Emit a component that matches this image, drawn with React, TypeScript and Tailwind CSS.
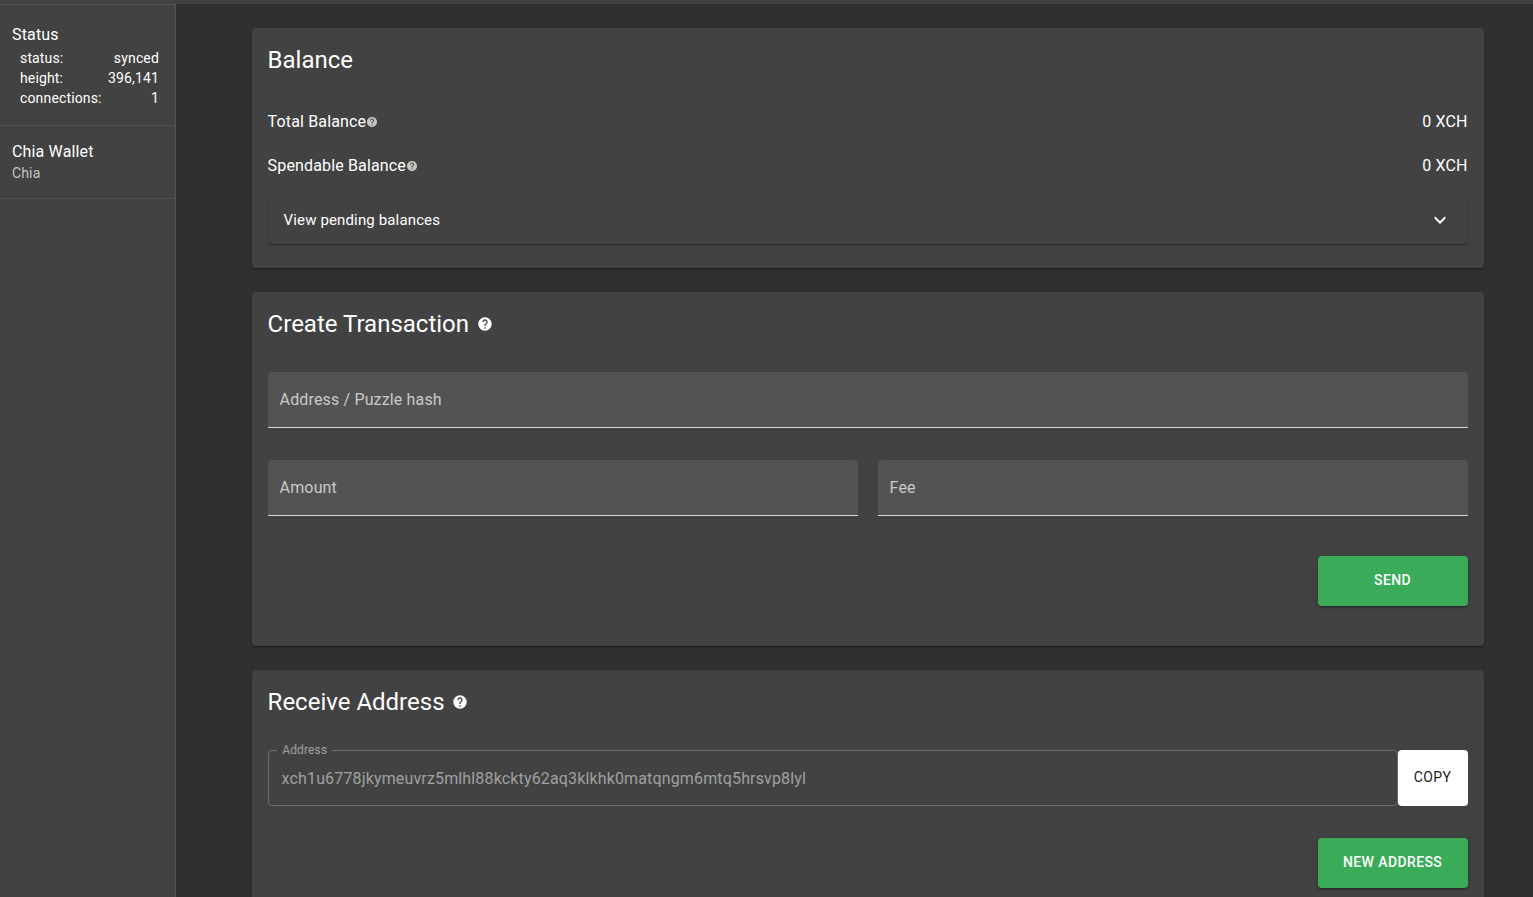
const HELP = "M12 2C6.48 2 2 6.48 2 12s4.48 10 10 10 10-4.48 10-10S17.52 2 12 2zm1 17h-2v-2h2v2zm2.07-7.75l-.9.92C13.45 12.9 13 13.5 13 15h-2v-.5c0-1.1.45-2.1 1.17-2.83l1.24-1.26c.37-.36.59-.86.59-1.41 0-1.1-.9-2-2-2s-2 .9-2 2H8c0-2.21 1.79-4 4-4s4 1.79 4 4c0 .88-.36 1.68-.93 2.25z";

function Help({ className }: { className: string }) {
  return (
    <svg viewBox="0 0 24 24" className={className} fill="currentColor">
      <path d={HELP} />
    </svg>
  );
}

function StatusRow({ label, value }: { label: string; value: string }) {
  return (
    <div className="flex h-5 items-center justify-between text-[14px] leading-5 tracking-[0.15px] text-white">
      <span>{label}</span>
      <span>{value}</span>
    </div>
  );
}

function BalanceRow({ label, value }: { label: string; value: string }) {
  return (
    <div className="flex h-11 items-center justify-between text-[16px] tracking-[0.15px] text-white">
      <div className="flex items-center">
        <span>{label}</span>
        <Help className="h-[12px] w-[12px] text-white/70" />
      </div>
      <span>{value}</span>
    </div>
  );
}

function Filled({ label, className }: { label: string; className: string }) {
  return (
    <div className={`flex h-14 items-center rounded-t border-b border-[#d5d5d5] bg-[#535353] px-3 text-[16px] tracking-[0.15px] text-white/70 ${className}`}>
      {label}
    </div>
  );
}

export default function App() {
  return (
    <div className="flex h-[897px] w-full flex-col overflow-hidden bg-[#303030] font-['Roboto',sans-serif]">
      <div className="h-1 shrink-0 bg-[#424242]" />
      <div className="flex min-h-0 flex-1">
        <aside className="w-[176px] shrink-0 border-t border-r border-[#515151] bg-[#424242]">
          <div className="h-[121px] border-b border-[#515151] pt-[18px] pr-4 pl-3">
            <div className="text-[16px] leading-6 tracking-[0.15px] text-white">Status</div>
            <div className="pl-2 pt-px">
              <StatusRow label="status:" value="synced" />
              <StatusRow label="height:" value="396,141" />
              <StatusRow label="connections:" value="1" />
            </div>
          </div>
          <div className="h-[73px] border-b border-[#515151] pt-[14px] pl-3">
            <div className="text-[16px] leading-6 tracking-[0.15px] text-white">Chia Wallet</div>
            <div className="-mt-px text-[14px] leading-5 tracking-[0.15px] text-white/70">Chia</div>
          </div>
        </aside>
        <main className="flex min-w-0 flex-1 flex-col gap-6 pt-6 pr-[49.4px] pl-[75.6px]">
          <section className="h-[240px] shrink-0 rounded bg-[#424242] p-4 shadow-[0_2px_1px_-1px_rgba(0,0,0,0.2),0_1px_1px_0_rgba(0,0,0,0.14),0_1px_3px_0_rgba(0,0,0,0.12)]">
            <h2 className="text-[24px] leading-8 text-white">Balance</h2>
            <div className="mt-6">
              <BalanceRow label="Total Balance" value="0 XCH" />
              <BalanceRow label="Spendable Balance" value="0 XCH" />
            </div>
            <div className="mt-[8px] flex h-12 items-center justify-between rounded bg-[#424242] px-4 text-[15px] tracking-[0.14px] text-white shadow-[0_2px_1px_-1px_rgba(0,0,0,0.2),0_1px_1px_0_rgba(0,0,0,0.14),0_1px_3px_0_rgba(0,0,0,0.12)]">
              <span>View pending balances</span>
              <svg viewBox="0 0 24 24" className="h-6 w-6 text-white" fill="currentColor">
                <path d="M16.59 8.59L12 13.17 7.41 8.59 6 10l6 6 6-6z" />
              </svg>
            </div>
          </section>

          <section className="h-[354px] shrink-0 rounded bg-[#424242] p-4 shadow-[0_2px_1px_-1px_rgba(0,0,0,0.2),0_1px_1px_0_rgba(0,0,0,0.14),0_1px_3px_0_rgba(0,0,0,0.12)]">
            <div className="flex h-8 items-center gap-2">
              <h2 className="text-[24px] leading-8 text-white">Create Transaction</h2>
              <Help className="h-4 w-4 text-white" />
            </div>
            <Filled label="Address / Puzzle hash" className="mt-[32px]" />
            <div className="mt-8 flex gap-5">
              <Filled label="Amount" className="flex-1" />
              <Filled label="Fee" className="flex-1" />
            </div>
            <div className="mt-10 flex justify-end">
              <button className="h-[50px] w-[150px] rounded bg-[#3aac59] pb-[2px] text-[14px] font-medium tracking-[0.4px] text-white shadow-[0_3px_1px_-2px_rgba(0,0,0,0.2),0_2px_2px_0_rgba(0,0,0,0.14),0_1px_5px_0_rgba(0,0,0,0.12)]">
                SEND
              </button>
            </div>
          </section>

          <section className="h-[300px] shrink-0 rounded bg-[#424242] p-4 shadow-[0_2px_1px_-1px_rgba(0,0,0,0.2),0_1px_1px_0_rgba(0,0,0,0.14),0_1px_3px_0_rgba(0,0,0,0.12)]">
            <div className="flex h-8 items-center gap-[7px]">
              <h2 className="text-[24px] leading-8 text-white">Receive Address</h2>
              <Help className="h-4 w-4 text-white" />
            </div>
            <div className="mt-[32px] flex">
              <div className="relative flex h-14 flex-1 items-center rounded border border-[#6d6d6d] px-[13px] pt-[2px] text-[16px] tracking-[0.15px] text-white/50">
                <span className="absolute -top-[8px] left-[8.6px] bg-[#424242] px-[5px] text-[12px] leading-[14px] text-white/50">Address</span>
                xch1u6778jkymeuvrz5mlhl88kckty62aq3klkhk0matqngm6mtq5hrsvp8lyl
              </div>
              <button className="h-14 w-[70px] rounded bg-white pb-[2px] text-[14px] font-normal tracking-[0.4px] text-[#212121]">
                COPY
              </button>
            </div>
            <div className="mt-8 flex justify-end">
              <button className="h-[50px] w-[150px] rounded bg-[#3aac59] pb-[2px] text-[14px] font-medium tracking-[0.4px] text-white shadow-[0_3px_1px_-2px_rgba(0,0,0,0.2),0_2px_2px_0_rgba(0,0,0,0.14),0_1px_5px_0_rgba(0,0,0,0.12)]">
                NEW ADDRESS
              </button>
            </div>
          </section>
        </main>
      </div>
    </div>
  );
}
